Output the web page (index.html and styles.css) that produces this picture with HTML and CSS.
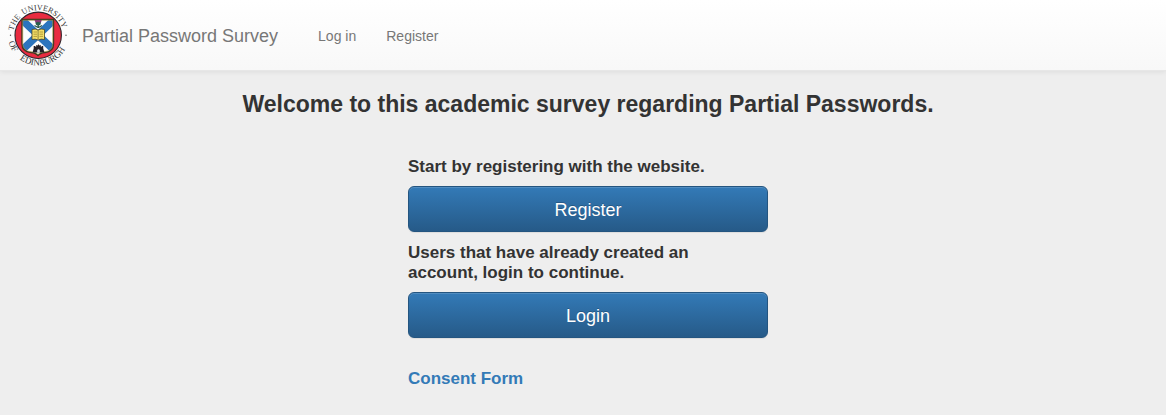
FILE: index.html
```html
<!DOCTYPE html>
<html lang="en">
<head>
<meta charset="utf-8">
<meta name="viewport" content="width=device-width, initial-scale=1">
<title>Partial Password Survey</title>
<link rel="stylesheet" href="styles.css">
</head>
<body>
<header class="navbar">
  <a class="logo" href="#" aria-label="The University of Edinburgh">
    <svg class="crest" viewBox="6 3 64 64" aria-hidden="true">
      <defs>
        <path id="ring-top" d="M13 35.3A25.2 25.2 0 0 1 63.4 35.3"/>
        <path id="ring-bottom" d="M7.9 35.3A30.3 30.3 0 0 0 68.5 35.3"/>
        <clipPath id="shield"><path d="M22 19.5H53.5V44Q53.5 51.5 45 52.5Q40 53 38 55.5Q36 53 31 52.5Q22 51.5 22 44Z"/></clipPath>
      </defs>
      <circle cx="38.2" cy="35.3" r="23.2" fill="#e92b40" stroke="#30252b" stroke-width="1.1"/>
      <g clip-path="url(#shield)">
        <path d="M21 19H54V56H21Z" fill="#fbfbfd"/>
        <path d="M20 18L56 52M56 18L20 52" stroke="#2b74be" stroke-width="7.5"/>
      </g>
      <path d="M22 19.5H53.5V44Q53.5 51.5 45 52.5Q40 53 38 55.5Q36 53 31 52.5Q22 51.5 22 44Z" fill="none" stroke="#3e3820" stroke-width="1.4"/>
      <path d="M22.8 20.3H52.7V44Q52.7 50.6 45 51.6Q40 52 38 54.2Q36 52 31 51.6Q22.8 50.6 22.8 44Z" fill="none" stroke="#b7a13c" stroke-width=".5"/>
      <path d="M34.5 20H41.8L40.7 23.2H35.8Z" fill="#873b75"/>
      <path d="M35.6 22.6Q38 21.5 40.7 22.6Q41.2 25.3 38.2 25.8Q35.2 25.3 35.6 22.6Z" fill="#27604c"/>
      <path d="M38.2 25V28M38 27.5L34.5 25.5M38.5 27.5L42 25.5" stroke="#285443" stroke-width="1.1"/>
      <path d="M32 29.5Q35.5 28.3 38 30Q41 28.3 44.5 29.5V39.5Q41 38.5 38.2 40Q35 38.5 32 39.5Z" fill="#f4df69" stroke="#514822" stroke-width=".8"/>
      <path d="M38.1 30V39.5" stroke="#685e26" stroke-width=".7"/>
      <path d="M33.5 32H37M33.5 34.2H37M33.5 36.4H37M39.5 32H43M39.5 34.2H43M39.5 36.4H43" stroke="#a58b31" stroke-width=".8"/>
      <path d="M36.3 46V44.9H37.3V45.4H38V44.6H39V45.4H39.7V44.9H40.7V46.5H42V46H43.2V48.5L44.5 52.6H32.5L33.7 48.5V46H35V46.5H36.3Z" fill="#232029"/>
      <path d="M37.2 52.6V50Q38.5 48.5 39.8 50V52.6Z" fill="#dadae0"/>
      <text class="crest-text"><textPath href="#ring-top" startOffset="6%">THE</textPath></text>
      <text class="crest-text"><textPath href="#ring-top" startOffset="30%">UNIVERSITY</textPath></text>
      <text class="crest-text crest-text-low"><textPath href="#ring-bottom" startOffset="7%">OF</textPath></text>
      <text class="crest-text crest-text-low"><textPath href="#ring-bottom" startOffset="29%">EDINBURGH</textPath></text>
      <circle cx="10.5" cy="35.3" r=".7" fill="#555"/>
      <circle cx="66" cy="35.3" r=".7" fill="#555"/>
    </svg>
  </a>
  <div class="menu">
    <a class="brand" href="#">Partial Password Survey</a>
    <nav class="links">
      <a class="link" href="#">Log in</a>
      <a class="link" href="#">Register</a>
    </nav>
  </div>
</header>
<main class="page">
  <h1 class="title">Welcome to this academic survey regarding Partial Passwords.</h1>
  <section class="panel">
    <h2 class="prompt">Start by registering with the website.</h2>
    <button class="btn" type="button">Register</button>
    <h2 class="prompt">Users that have already created an account, login to continue.</h2>
    <button class="btn" type="button">Login</button>
    <p class="consent"><a class="consent-link" href="#">Consent Form</a></p>
  </section>
</main>
</body>
</html>
```

FILE: styles.css
```css
* { box-sizing: border-box; }
body {
  margin: 0;
  background: #eee;
  color: #333;
  font-family: "Liberation Sans", Arial, sans-serif;
  font-size: 14px;
  line-height: 20px;
}
a { text-decoration: none; }
.navbar {
  display: flex;
  align-items: center;
  min-height: 71px;
  padding: 3px 6px;
  background: linear-gradient(#fff, #f8f8f8);
  border-bottom: 1px solid #e7e7e7;
  box-shadow: 0 1px 5px rgba(0, 0, 0, .075);
}
.logo { display: flex; }
.crest {
  width: 64px;
  height: 64px;
  overflow: visible;
}
.crest-text {
  font-family: "Liberation Serif", serif;
  font-size: 8px;
  fill: #333;
}
.crest-text-low { font-size: 9px; }
.menu {
  display: flex;
  align-items: center;
  padding-top: 2px;
}
.brand {
  margin-left: 12px;
  color: #777;
  font-size: 18px;
}
.links {
  display: flex;
  gap: 30px;
  margin-left: 40px;
}
.link { color: #777; }
.page { padding: 20px 15px 24px 25px; }
.title {
  margin: 0;
  font-size: 23px;
  line-height: 26px;
  font-weight: 700;
  text-align: center;
}
.panel {
  max-width: 360px;
  margin: 40px auto 0;
}
.prompt {
  margin: 11px 0 9px;
  padding-right: 16px;
  font-size: 17px;
  line-height: 20px;
  font-weight: 700;
}
.prompt:first-child { margin-top: 0; }
.btn {
  display: block;
  width: 100%;
  padding: 11px 16px 9px;
  border: 1px solid #245580;
  border-radius: 6px;
  background: linear-gradient(#337ab7, #265a88);
  box-shadow: inset 0 1px 0 rgba(255, 255, 255, .15), 0 1px 1px rgba(0, 0, 0, .075);
  color: #fff;
  font-family: inherit;
  font-size: 18px;
  line-height: 24px;
  text-shadow: 0 -1px 0 rgba(0, 0, 0, .2);
}
.consent {
  margin: 31px 0 0;
  font-size: 17px;
  font-weight: 700;
}
.consent-link { color: #337ab7; }
```
